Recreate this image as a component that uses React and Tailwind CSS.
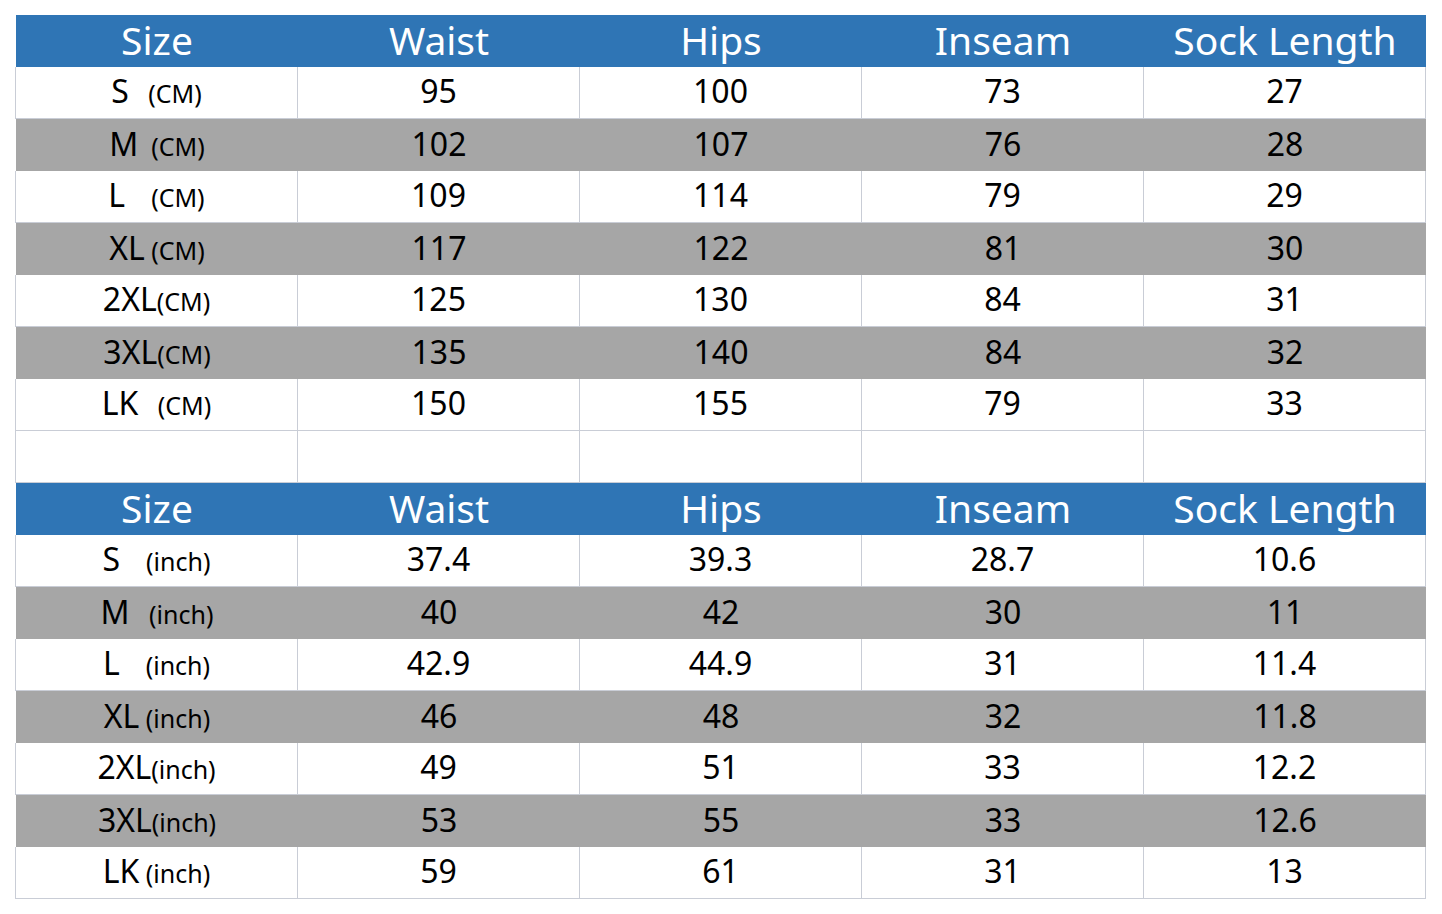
import React from "react";

const cols = ["Size", "Waist", "Hips", "Inseam", "Sock Length"];

const cm = [
  ["S", "   (CM)", "95", "100", "73", "27"],
  ["M", "  (CM)", "102", "107", "76", "28"],
  ["L", "    (CM)", "109", "114", "79", "29"],
  ["XL", " (CM)", "117", "122", "81", "30"],
  ["2XL", "(CM)", "125", "130", "84", "31"],
  ["3XL", "(CM)", "135", "140", "84", "32"],
  ["LK", "   (CM)", "150", "155", "79", "33"],
];

const inch = [
  ["S", "    (inch)", "37.4", "39.3", "28.7", "10.6"],
  ["M", "   (inch)", "40", "42", "30", "11"],
  ["L", "    (inch)", "42.9", "44.9", "31", "11.4"],
  ["XL", " (inch)", "46", "48", "32", "11.8"],
  ["2XL", "(inch)", "49", "51", "33", "12.2"],
  ["3XL", "(inch)", "53", "55", "33", "12.6"],
  ["LK", " (inch)", "59", "61", "31", "13"],
];

function Header() {
  return (
    <div className="flex h-[52px] bg-[#2f75b5] text-white">
      {cols.map((c) => (
        <div key={c} className="w-[282px] flex items-center justify-center text-[39px] leading-none pb-[4px]">
          {c}
        </div>
      ))}
    </div>
  );
}

function Row({ r, gray }) {
  const cell = gray
    ? "w-[282px] h-[52px] flex items-center justify-center bg-[#a6a6a6] pb-[3px]"
    : "w-[282px] h-[52px] flex items-center justify-center bg-white border-r border-b border-[#c9cdd6] pb-[3px]";
  return (
    <div className={gray ? "flex" : "flex border-l border-[#c9cdd6] -ml-px"}>
      <div className={cell}>
        <span className="whitespace-pre text-[32px] leading-none text-black">
          {r[0]}
          <span className="text-[25px]">{r[1]}</span>
        </span>
      </div>
      {r.slice(2).map((v, i) => (
        <div key={i} className={cell}>
          <span className="text-[32px] leading-none text-black">{v}</span>
        </div>
      ))}
    </div>
  );
}

export default function App() {
  return (
    <div className="w-[1442px] h-[914px] bg-white pt-[15px] pl-[16px]" style={{ fontFamily: '"Noto Sans", "Open Sans", sans-serif' }}>
      <div className="w-[1410px]">
        <Header />
        {cm.map((r, i) => (
          <Row key={i} r={r} gray={i % 2 === 1} />
        ))}
        <Row r={["", "", "", "", "", ""]} gray={false} />
        <Header />
        {inch.map((r, i) => (
          <Row key={i} r={r} gray={i % 2 === 1} />
        ))}
      </div>
    </div>
  );
}
